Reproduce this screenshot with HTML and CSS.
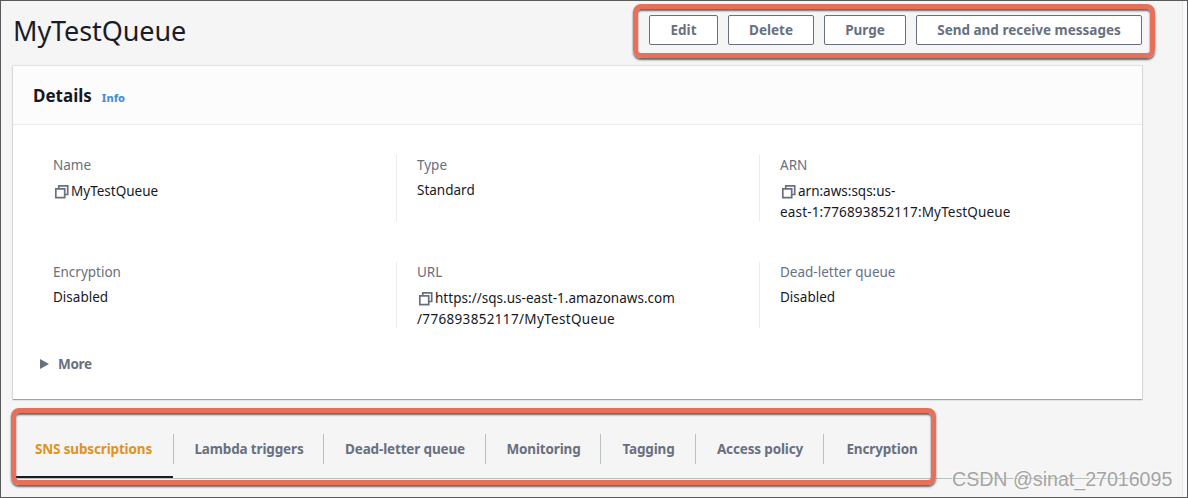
FILE: index.html
```
<!DOCTYPE html>
<html lang="en">

<head>
  <meta charset="UTF-8">
  <meta name="viewport" content="width=device-width, initial-scale=1.0">
  <title>MyTestQueue</title>
  <link rel="stylesheet" href="styles.css">
</head>

<body>
  <svg class="defs">
    <symbol id="copy" viewBox="0 0 16 16">
      <path d="M4.750 4.500V1.800H13.700v8.700H11M1.800 4.800h8.900v8.900H1.800z" fill="none" stroke="currentColor" stroke-width="1.700" />
    </symbol>
  </svg>
  <div class="page">
    <div class="header">
      <h1 class="title">MyTestQueue</h1>
      <div class="actions">
        <button class="btn">Edit</button>
        <button class="btn">Delete</button>
        <button class="btn">Purge</button>
        <button class="btn">Send and receive messages</button>
      </div>
    </div>
    <div class="panel">
      <div class="panel-header">
        <h2 class="panel-title">Details</h2>
        <a class="info">Info</a>
      </div>
      <div class="details">
        <div class="item">
          <div class="label">Name</div>
          <div class="value copyable"><svg class="copy"><use href="#copy" /></svg>MyTestQueue</div>
        </div>
        <div class="item">
          <div class="label">Type</div>
          <div class="value">Standard</div>
        </div>
        <div class="item">
          <div class="label">ARN</div>
          <div class="value copyable"><svg class="copy"><use href="#copy" /></svg>arn:aws:sqs:us-<br><span class="arn">east-1:776893852117:MyTestQueue</span></div>
        </div>
        <div class="item">
          <div class="label">Encryption</div>
          <div class="value">Disabled</div>
        </div>
        <div class="item">
          <div class="label">URL</div>
          <div class="value copyable"><svg class="copy"><use href="#copy" /></svg><span class="url">https://sqs.us-east-1.amazonaws.com</span><br><span class="url-path">/776893852117/MyTestQueue</span></div>
        </div>
        <div class="item">
          <div class="label">Dead-letter queue</div>
          <div class="value">Disabled</div>
        </div>
      </div>
      <div class="more"><span class="caret"></span>More</div>
    </div>
    <div class="tabs">
      <div class="tab active"><span>SNS subscriptions</span></div>
      <div class="tab"><span>Lambda triggers</span></div>
      <div class="tab"><span>Dead-letter queue</span></div>
      <div class="tab"><span>Monitoring</span></div>
      <div class="tab"><span>Tagging</span></div>
      <div class="tab"><span>Access policy</span></div>
      <div class="tab"><span>Encryption</span></div>
    </div>
    <div class="rail"></div>
    <div class="mark mark-actions"></div>
    <div class="mark mark-tabs"></div>
    <div class="watermark">CSDN @sinat_27016095</div>
  </div>
</body>

</html>
```
FILE: styles.css
```
* {
  box-sizing: border-box;
}

body {
  margin: 0;
  font-family: "Noto Sans", "Open Sans", sans-serif;
  font-size: 13.5px;
  color: #16191f;
}

.defs {
  display: none;
}

.page {
  position: relative;
  width: 1188px;
  height: 498px;
  padding: 0 45px 0 12px;
  border: 1px solid #5a5a5c;
  background-color: #f5f5f5;
  overflow: hidden;
}

.header {
  display: flex;
  justify-content: space-between;
  align-items: flex-start;
  height: 65px;
  padding-top: 14px;
}

.title {
  margin: -3px 0 0;
  font-size: 27px;
  font-weight: 400;
  line-height: 38px;
  letter-spacing: -0.1px;
  color: #1a1c29;
}

.actions {
  display: grid;
  grid-template-columns: 69px 86px 82px 226px;
  gap: 10px;
}

.btn {
  height: 30px;
  padding: 0;
  border: 1px solid #687080;
  border-radius: 2px;
  background-color: #fff;
  color: #687080;
  font-family: inherit;
  font-size: 13.5px;
  font-weight: 700;
  white-space: nowrap;
}

.panel {
  width: 1129px;
  height: 333px;
  background-color: #fff;
  box-shadow: 0 1px 1px #9da3a3, 0 0 1px 1px #e2e4e4;
}

.panel-header {
  display: flex;
  align-items: baseline;
  gap: 10px;
  height: 59px;
  padding: 15px 20px 0;
  background-color: #fcfcfc;
  border-bottom: 1px solid #ebebeb;
}

.panel-title {
  margin: 0;
  font-size: 17px;
  font-weight: 700;
  line-height: 30px;
}

.info {
  color: #4a8bd4;
  font-size: 11px;
  font-weight: 800;
}

.details {
  display: grid;
  grid-template-columns: 363px 363px 363px;
  grid-template-rows: 66px 66px;
  row-gap: 41px;
  padding: 30px 20px 0;
}

.item {
  padding-left: 20px;
  border-left: 1px solid #ebebeb;
}

.item:nth-child(3n+1) {
  border-left: none;
}

.label {
  line-height: 21px;
  color: #687080;
}

.value {
  margin-top: 4px;
  line-height: 21px;
}

.copyable {
  margin-top: 5px;
}

.copy {
  width: 16px;
  height: 16px;
  margin: 0 1px 0 1px;
  color: #687080;
  vertical-align: -4px;
}

.arn {
  letter-spacing: 0.16px;
}

.url {
  letter-spacing: 0.03px;
}

.url-path {
  letter-spacing: 0.33px;
}

.more {
  display: flex;
  align-items: center;
  height: 20px;
  margin: 26px 0 0 27px;
  color: #687080;
  font-weight: 700;
  letter-spacing: -0.3px;
}

.caret {
  width: 9px;
  height: 10px;
  margin-right: 9px;
  background-color: #687080;
  clip-path: polygon(0 0, 100% 50%, 0 100%);
}

.tabs {
  display: grid;
  grid-template-columns: 161px 150px 162px 115px 95px 128px 115px;
  width: 1129px;
  height: 63px;
  margin-top: 17px;
  border-bottom: 1px solid #b9c1c1;
}

.tab {
  height: 62px;
  padding-top: 18px;
  color: #687080;
  font-weight: 700;
  line-height: 30px;
  letter-spacing: -0.15px;
  text-align: center;
  white-space: nowrap;
}

.tab span {
  display: block;
  height: 30px;
  padding-left: 1px;
  border-right: 1px solid #b9c1c1;
}

.tab:last-child span {
  border-right: none;
}

.active {
  background: linear-gradient(#1a1c29, #1a1c29) 0 100% / 160px 2px no-repeat;
  color: #e0921f;
}

/* scrollbar edge */
.rail {
  position: absolute;
  top: 0;
  right: 0;
  width: 5px;
  height: 496px;
  background-color: #fafafa;
  border-left: 1px solid #e6e6e6;
}

.mark {
  position: absolute;
  border: 5px solid #e8705a;
  border-radius: 8px;
  box-shadow: 0 2px 2px #666, inset 0 2px 2px #666;
}

.mark-actions {
  left: 632px;
  top: 3px;
  width: 522px;
  height: 54px;
}

.mark-tabs {
  left: 10px;
  top: 407px;
  width: 925px;
  height: 77px;
}

.watermark {
  position: absolute;
  left: 951px;
  top: 466px;
  font-family: "Liberation Sans", sans-serif;
  font-size: 19.6px;
  line-height: 24px;
  color: #a5a5a5;
  text-shadow: -1px -1px 0 #fafafa;
  white-space: nowrap;
}
```
